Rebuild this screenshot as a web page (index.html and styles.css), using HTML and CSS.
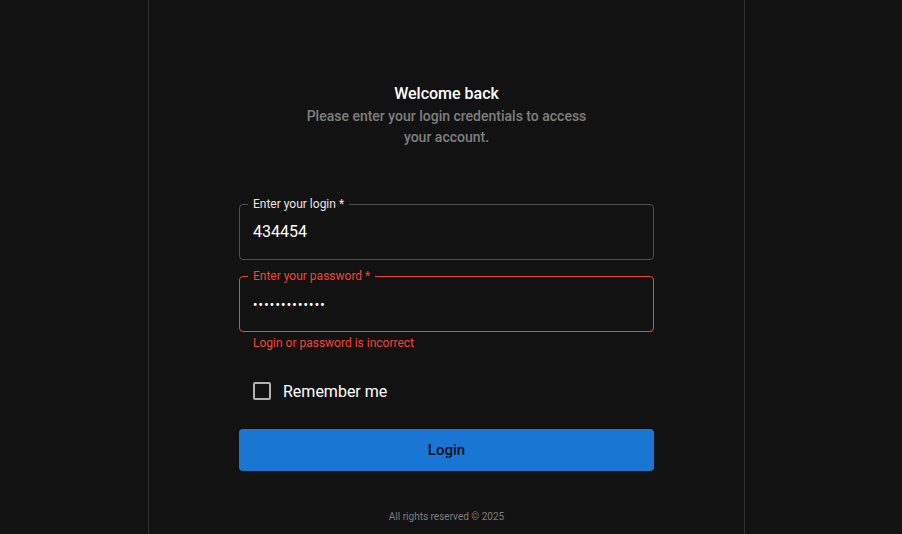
FILE: index.html
```html
<!DOCTYPE html>
<html lang="en">
<head>
<meta charset="utf-8">
<title>Login</title>
<link rel="stylesheet" href="styles.css">
</head>
<body>
<main class="column">
  <div class="form">
    <header class="head">
      <h1 class="title">Welcome back</h1>
      <p class="subtitle">Please enter your login credentials to access your account.</p>
    </header>
    <div class="field">
      <span class="label">Enter your login *</span>
      <span class="value">434454</span>
    </div>
    <div class="field field-error">
      <span class="label">Enter your password *</span>
      <span class="value dots">•••••••••••••</span>
    </div>
    <p class="helper">Login or password is incorrect</p>
    <label class="remember">
      <span class="box"></span>
      <span>Remember me</span>
    </label>
    <button class="btn" type="button">Login</button>
    <footer class="foot">All rights reserved © 2025</footer>
  </div>
</main>
</body>
</html>
```
FILE: styles.css
```css
html, body {
  margin: 0;
  padding: 0;
  background: #121212;
  height: 100%;
}
body {
  font-family: Roboto, "Liberation Sans", sans-serif;
  color: #fff;
}
.column {
  box-sizing: border-box;
  margin-left: 148px;
  width: 597px;
  height: 534px;
  border-left: 1px solid #2f2f2f;
  border-right: 1px solid #2f2f2f;
  display: flex;
  justify-content: center;
}
.form {
  width: 415px;
  display: flex;
  flex-direction: column;
  padding-top: 82px;
}
.head {
  display: flex;
  flex-direction: column;
  align-items: center;
  text-align: center;
}
.title {
  margin: 0;
  font-size: 16px;
  font-weight: 500;
  line-height: 24px;
  color: #fff;
}
.subtitle {
  margin: 0;
  width: 290px;
  font-size: 14px;
  font-weight: 500;
  line-height: 21px;
  color: #7f7f7f;
}
.field {
  position: relative;
  box-sizing: border-box;
  height: 56px;
  border: 1px solid #4e4e4e;
  border-radius: 4px;
  display: flex;
  align-items: center;
  padding: 0 13px;
  margin-top: 56px;
}
.field + .field {
  margin-top: 16px;
}
.label {
  position: absolute;
  top: -9px;
  left: 8px;
  padding: 0 5px;
  background: #121212;
  font-size: 12px;
  line-height: 16px;
  color: #e6e6e6;
}
.value {
  font-size: 16px;
  color: #fff;
  line-height: 24px;
}
.dots {
  font-size: 12px;
  letter-spacing: 1.3px;
  padding-top: 2px;
  font-weight: 700;
}
.field-error {
  border-color: #f44336;
}
.field-error .label {
  color: #f44336;
}
.helper {
  margin: 1px 0 0 14px;
  font-size: 12px;
  line-height: 20px;
  color: #f44336;
}
.remember {
  display: flex;
  align-items: center;
  height: 42px;
  margin-top: 17px;
  padding-left: 14px;
  font-size: 16px;
  color: #fff;
  gap: 12px;
}
.box {
  box-sizing: border-box;
  width: 18px;
  height: 18px;
  border: 2px solid #b3b3b3;
  border-radius: 2px;
}
.btn {
  margin-top: 17px;
  height: 42px;
  border: none;
  border-radius: 4px;
  background: #1976d2;
  color: rgba(0, 0, 0, 0.87);
  font-family: Roboto, "Liberation Sans", sans-serif;
  font-size: 15px;
  font-weight: 500;
  cursor: pointer;
}
.foot {
  margin-top: 39px;
  text-align: center;
  font-size: 10px;
  line-height: 14px;
  color: #7f7f7f;
}
```
